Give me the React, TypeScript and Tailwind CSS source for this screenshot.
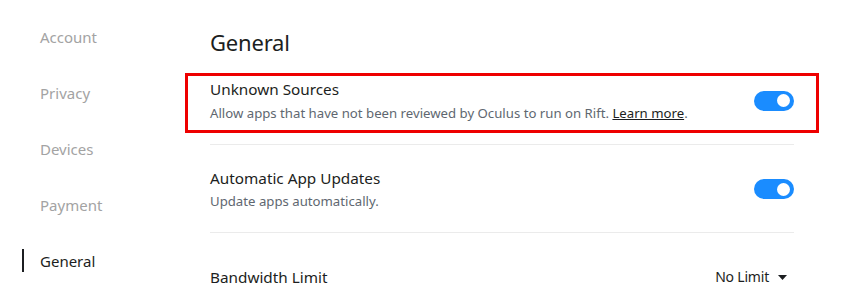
import React from "react";

function Toggle() {
  return (
    <div className="relative h-[20px] w-[40px] shrink-0 rounded-full bg-[#1a8cff]">
      <div className="absolute right-[4px] top-[3.5px] h-[13px] w-[13px] rounded-full bg-white" />
    </div>
  );
}

const side = ["Account", "Privacy", "Devices", "Payment"];

export default function App() {
  return (
    <div
      className="relative flex h-[302px] w-[859px] overflow-hidden bg-white"
      style={{ fontFamily: '"Noto Sans", "Open Sans", sans-serif' }}
    >
      <div className="flex w-[210px] shrink-0 flex-col pt-[9px]">
        {side.map((s) => (
          <div key={s} className="flex h-[56px] items-center pl-[40px] text-[15px] text-[#a3a3a3]">
            {s}
          </div>
        ))}
        <div className="relative flex h-[56px] items-center pl-[40px] text-[15px] text-[#1c1e21]">
          <div className="absolute left-[22px] top-[16px] h-[23px] w-[2px] bg-[#1c1e21]" />
          General
        </div>
      </div>
      <div className="flex w-[584px] flex-col pt-[24px]">
        <div className="h-[36px] text-[22px] leading-[36px] tracking-[-0.2px] text-[#1c1e21]">General</div>
        <div className="flex items-center justify-between border-b border-[#ebebeb] pb-[21px] pt-[18px]">
          <div className="flex flex-col gap-[3px]">
            <div className="text-[15.3px] leading-[22px] text-[#1c1e21]">Unknown Sources</div>
            <div className="text-[13.2px] leading-[20px] text-[#606770]">
              Allow apps that have not been reviewed by Oculus to run on Rift.{" "}
              <span className="text-[#1c1e21] underline">Learn more</span>.
            </div>
          </div>
          <Toggle />
        </div>
        <div className="flex items-center justify-between border-b border-[#ebebeb] pb-[21px] pt-[22px]">
          <div className="flex flex-col gap-[2px]">
            <div className="text-[15.3px] leading-[22px] text-[#1c1e21]">Automatic App Updates</div>
            <div className="text-[13.2px] leading-[20px] text-[#606770]">Update apps automatically.</div>
          </div>
          <Toggle />
        </div>
        <div className="flex items-center justify-between pt-[33px]">
          <div className="text-[15.3px] leading-[22px] text-[#1c1e21]">Bandwidth Limit</div>
          <div className="flex items-center gap-[9px] pr-[7px] text-[14px] leading-[22px] tracking-[-0.2px] text-[#1c1e21]">
            No Limit
            <svg width="9" height="5" viewBox="0 0 9 5">
              <path d="M0 0 L9 0 L4.5 5 Z" fill="#1c1e21" />
            </svg>
          </div>
        </div>
      </div>
      <div className="pointer-events-none absolute left-[185px] top-[73px] h-[60px] w-[634px] border-[3px] border-[#ee0000]" />
    </div>
  );
}
